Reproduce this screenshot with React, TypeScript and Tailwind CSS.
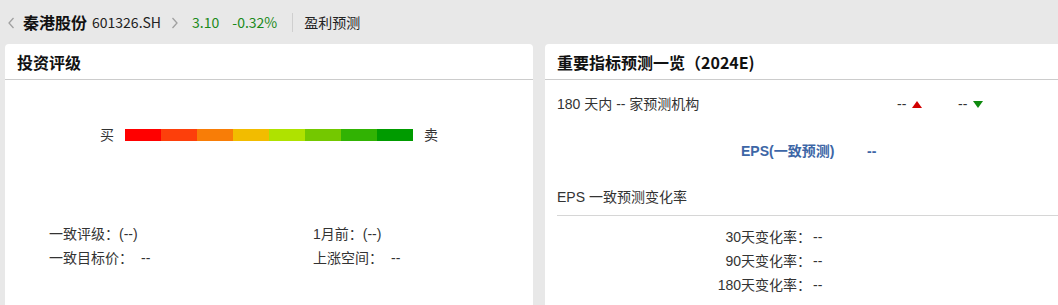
import React from 'react';

const barColors = ['bg-[#ff0000]', 'bg-[#fd3f0b]', 'bg-[#f87d07]', 'bg-[#f2bc00]', 'bg-[#afe200]', 'bg-[#74c800]', 'bg-[#31b303]', 'bg-[#009b00]'];

const body = { fontFamily: '"Liberation Sans", "Noto Sans CJK SC", sans-serif' };
const cjk = { fontFamily: '"Noto Sans CJK SC", "Liberation Sans", sans-serif' };

const Panel: React.FC<{ title: string; children: React.ReactNode }> = ({ title, children }) => (
    <div className="w-[528px] h-[261px] shrink-0 bg-white rounded-t-[4px] overflow-hidden">
        <div className="h-[36px] border-b border-[#cccccc] px-[12px] flex items-center">
            <h2 className="text-[16px] font-bold text-[#111] leading-none" style={cjk}>{title}</h2>
        </div>
        {children}
    </div>
);

const App: React.FC = () => {
    return (
        <div className="w-[1058px] h-[305px] bg-[#e8e8e8] overflow-hidden text-[#333]" style={body}>
            <div className="h-[44px] flex items-center pl-[8px]" style={cjk}>
                <svg width="7" height="12" viewBox="0 0 7 12" className="mt-[1px]">
                    <polyline points="5.5,1 1,6 5.5,11" fill="none" stroke="#a0a0a0" strokeWidth="1.3" />
                </svg>
                <span className="ml-[8px] text-[16px] font-bold text-[#111] leading-none">秦港股份</span>
                <span className="ml-[5px] text-[14px] text-[#222] leading-none">601326.SH</span>
                <svg width="7" height="12" viewBox="0 0 7 12" className="ml-[10px] mt-[1px]">
                    <polyline points="1.5,1 6,6 1.5,11" fill="none" stroke="#a0a0a0" strokeWidth="1.3" />
                </svg>
                <span className="ml-[14px] text-[14px] text-[#1b8a1b] leading-none">3.10</span>
                <span className="ml-[13px] text-[14px] text-[#1b8a1b] leading-none">-0.32%</span>
                <div className="ml-[15px] w-px h-[19px] bg-[#cfcfcf]" />
                <span className="ml-[11px] text-[14px] text-[#222] leading-none">盈利预测</span>
            </div>

            <div className="flex gap-[12px] pl-[5px]">
                <Panel title="投资评级">
                    <div className="mt-[49px] h-[12px] flex items-center justify-center gap-[11px] text-[14px]">
                        <span className="leading-none">买</span>
                        <div className="flex">
                            {barColors.map(c => (
                                <div key={c} className={`w-[36px] h-[12px] ${c}`} />
                            ))}
                        </div>
                        <span className="leading-none">卖</span>
                    </div>
                    <div className="mt-[81px] grid grid-cols-2 text-[14px] leading-[24px]">
                        <div className="pl-[44px]">一致评级：(--)</div>
                        <div className="pl-[44px]">1月前：(--)</div>
                        <div className="pl-[44px]">一致目标价：<span className="ml-[8px]">--</span></div>
                        <div className="pl-[44px]">上涨空间：<span className="ml-[8px]">--</span></div>
                    </div>
                </Panel>

                <Panel title="重要指标预测一览（2024E)">
                    <div className="text-[14px] leading-[24px]">
                        <div className="mt-[12px] h-[24px] flex items-center pl-[12px]">
                            <span className="w-[340px]">180 天内 -- 家预测机构</span>
                            <span className="w-[61px] flex items-center">
                                --
                                <span className="ml-[6px] w-0 h-0 border-l-[5px] border-r-[5px] border-b-[7px] border-l-transparent border-r-transparent border-b-[#d10000]" />
                            </span>
                            <span className="flex items-center">
                                --
                                <span className="ml-[6px] w-0 h-0 border-l-[5px] border-r-[5px] border-t-[7px] border-l-transparent border-r-transparent border-t-[#0f8a0f]" />
                            </span>
                        </div>
                        <div className="mt-[23px] h-[24px] flex items-center font-bold text-[#3d66a6]">
                            <span className="ml-[196px] w-[126px]">EPS(一致预测)</span>
                            <span>--</span>
                        </div>
                        <div className="mt-[22px] ml-[12px] h-[31px] border-b border-[#d6d6d6]">
                            EPS 一致预测变化率
                        </div>
                        <div className="mt-[9px]">
                            {['30', '90', '180'].map(d => (
                                <div key={d} className="h-[24px] flex">
                                    <span className="w-[266px] text-right">{d}天变化率：</span>
                                    <span className="ml-[2px]">--</span>
                                </div>
                            ))}
                        </div>
                    </div>
                </Panel>
            </div>
        </div>
    );
};

export default App;
